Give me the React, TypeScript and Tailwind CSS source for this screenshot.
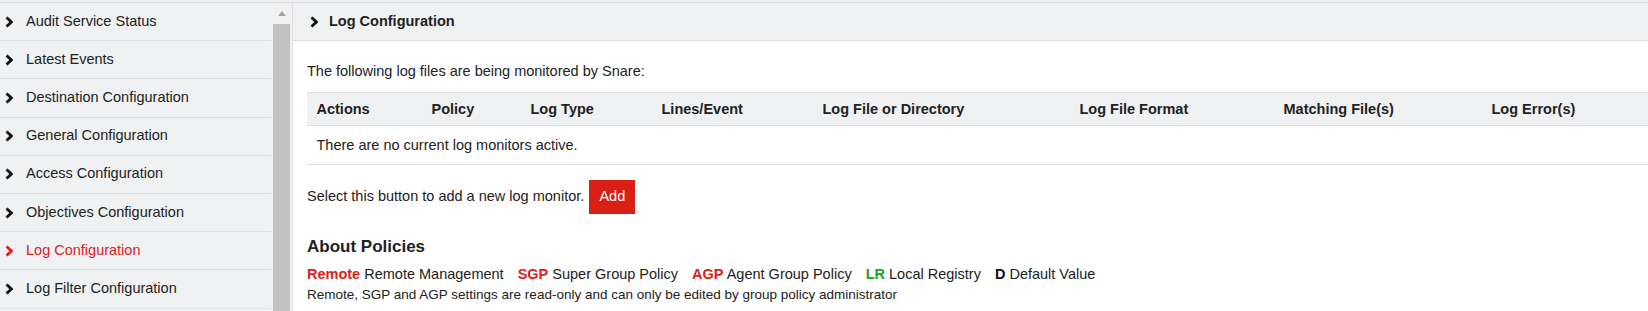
import React from 'react';

const MENU = [
  'Audit Service Status',
  'Latest Events',
  'Destination Configuration',
  'General Configuration',
  'Access Configuration',
  'Objectives Configuration',
  'Log Configuration',
  'Log Filter Configuration',
];

const ACTIVE = 'Log Configuration';

const COLUMNS = [
  { label: 'Actions', w: 'w-[115px]' },
  { label: 'Policy', w: 'w-[99px]' },
  { label: 'Log Type', w: 'w-[131px]' },
  { label: 'Lines/Event', w: 'w-[161px]' },
  { label: 'Log File or Directory', w: 'w-[257px]' },
  { label: 'Log File Format', w: 'w-[204px]' },
  { label: 'Matching File(s)', w: 'w-[208px]' },
  { label: 'Log Error(s)', w: 'w-auto' },
];

function Chevron({ color = '#111' }: { color?: string }) {
  return (
    <svg width="8" height="12" viewBox="0 0 8 12" className="shrink-0">
      <polyline points="1.5,1.4 6.4,6 1.5,10.6" fill="none" stroke={color} strokeWidth="2.8" strokeLinecap="butt" strokeLinejoin="miter" />
    </svg>
  );
}

function Sidebar() {
  return (
    <div className="w-[271px] shrink-0 bg-[#f0f1f3]">
      {MENU.map((item) => {
        const active = item === ACTIVE;
        return (
          <div key={item} className="flex items-center h-[38.2px] border-b border-[#dcdde0] pl-[5px]">
            <Chevron color={active ? '#e0201b' : '#111'} />
            <span className={`ml-[13px] text-[14.5px] ${active ? 'text-[#e0201b]' : 'text-[#222]'}`}>{item}</span>
          </div>
        );
      })}
    </div>
  );
}

function Scrollbar() {
  return (
    <div className="w-[21px] shrink-0 bg-[#f1f1f1] flex flex-col">
      <div className="h-[21px] flex items-center justify-center">
        <svg width="8" height="5" viewBox="0 0 8 5">
          <polygon points="0,5 4,0 8,5" fill="#a3a3a3" />
        </svg>
      </div>
      <div className="flex-1 mx-[2px] bg-[#c1c1c1]" />
    </div>
  );
}

export default function App() {
  return (
    <div className="w-[1648px] h-[311px] overflow-hidden flex flex-col bg-white text-[#222]" style={{ fontFamily: '"Liberation Sans", Arial, sans-serif' }}>
      <div className="h-[2px] bg-[#f0f1f3] shrink-0" />
      <div className="h-px bg-[#dcdde0] shrink-0" />
      <div className="flex flex-1 min-h-0">
        <Sidebar />
        <Scrollbar />
        <div className="w-px bg-[#dedfe1] shrink-0" />

        <div className="flex-1 min-w-0 flex flex-col">
          <div className="h-[38px] shrink-0 bg-[#f0f1f3] border-b border-[#dcdde0] flex items-center pl-[17px]">
            <Chevron />
            <span className="ml-[11px] text-[14.5px] font-bold">Log Configuration</span>
          </div>

          <div className="pl-[14px] pt-[22px]">
            <p className="text-[14.5px] leading-[17px]">The following log files are being monitored by Snare:</p>

            <table className="mt-[12px] w-full table-fixed border-collapse text-[14.5px]">
              <colgroup>
                {COLUMNS.map((c) => (
                  <col key={c.label} className={c.w} />
                ))}
              </colgroup>
              <thead>
                <tr className="bg-[#f0f1f3] border-y border-[#dcdde0]">
                  {COLUMNS.map((c) => (
                    <th key={c.label} className="h-[33px] text-left font-bold pl-[9.5px] leading-[17px] whitespace-nowrap">{c.label}</th>
                  ))}
                </tr>
              </thead>
              <tbody>
                <tr className="border-b border-[#dcdde0]">
                  <td colSpan={8} className="h-[39px] pl-[9.5px] leading-[17px]">There are no current log monitors active.</td>
                </tr>
              </tbody>
            </table>

            <div className="mt-[15px] flex items-center text-[14.5px]">
              <span>Select this button to add a new log monitor.</span>
              <button className="ml-[5px] h-[34px] w-[46px] bg-[#d91f16] text-white text-[14.5px]">Add</button>
            </div>

            <h2 className="mt-[23px] text-[17px] leading-[20px] font-bold">About Policies</h2>

            <div className="mt-[7px] text-[14.5px] leading-[20px] whitespace-nowrap">
              <span className="font-bold text-[#e0201b]">Remote</span> Remote Management
              <span className="ml-[14px] font-bold text-[#e0201b]">SGP</span> Super Group Policy
              <span className="ml-[14px] font-bold text-[#e0201b]">AGP</span> Agent Group Policy
              <span className="ml-[14px] font-bold text-[#23a023]">LR</span> Local Registry
              <span className="ml-[14px] font-bold text-[#111]">D</span> Default Value
            </div>
            <p className="mt-[3px] text-[13.5px] leading-[16px]">Remote, SGP and AGP settings are read-only and can only be edited by group policy administrator</p>
          </div>
        </div>
      </div>
    </div>
  );
}
